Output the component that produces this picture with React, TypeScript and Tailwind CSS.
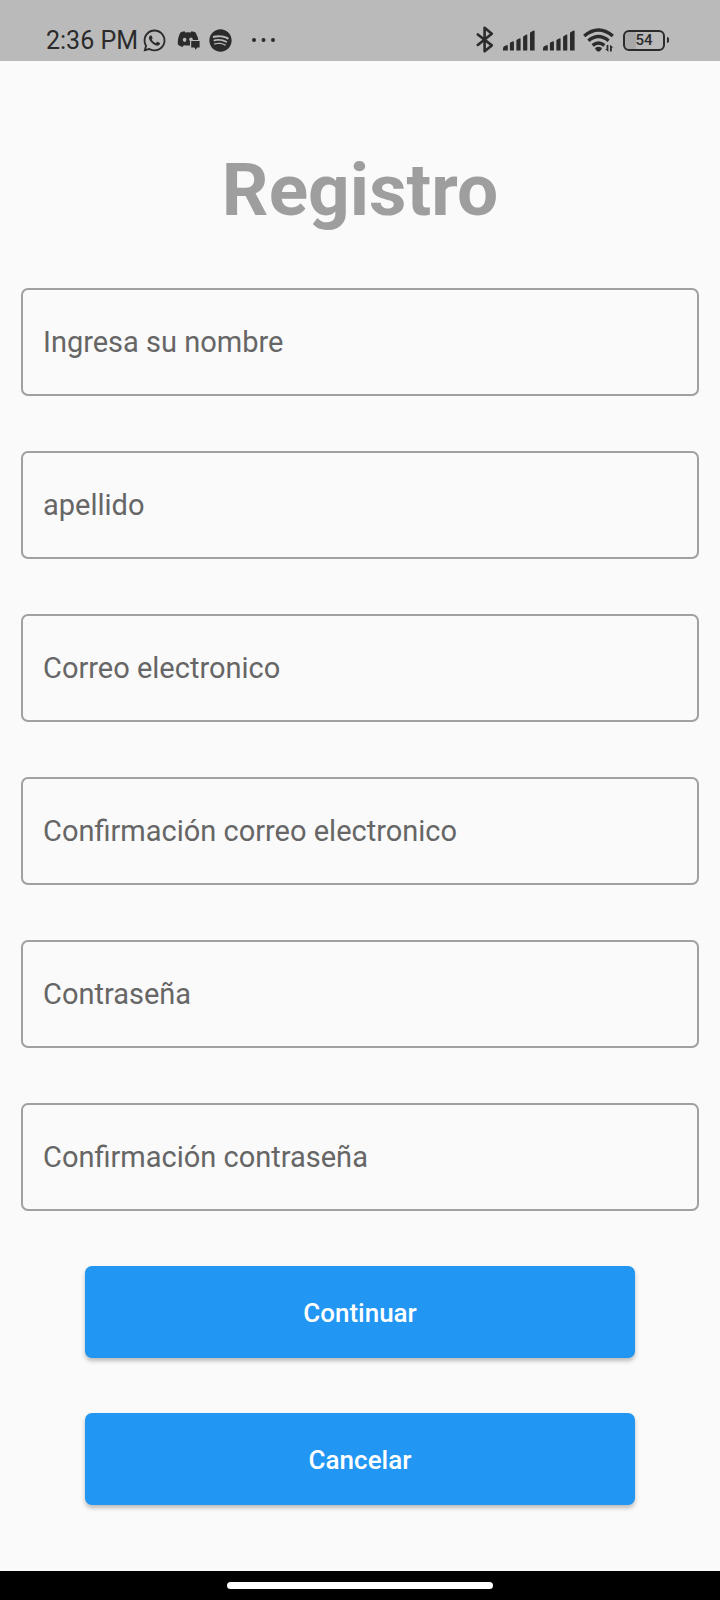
import { FaWhatsapp, FaSpotify } from "react-icons/fa";

const fields = [
  { id: "nombre", label: "Ingresa su nombre", type: "text" },
  { id: "apellido", label: "apellido", type: "text" },
  { id: "correo", label: "Correo electronico", type: "email" },
  { id: "correo2", label: "Confirmación correo electronico", type: "email" },
  { id: "clave", label: "Contraseña", type: "password" },
  { id: "clave2", label: "Confirmación contraseña", type: "password" },
];

function DiscordIcon() {
  return (
    <svg className="h-5 w-6" viewBox="0 0 24 20" aria-hidden="true">
      <path
        d="M7.6 1.2 8.3 2.4Q11 1.9 13.7 2.4L14.4 1.2Q17 1.6 18.6 2.6Q21.6 7.4 21.6 13.6L21.6 14.6Q19.5 16.4 16.4 17L15.2 15.2Q11 16 6.8 15.2L5.6 17Q2.6 16.4 .8 14.6Q.4 8 3.4 2.6Q5 1.6 7.6 1.2z"
        fill="currentColor"
      />
      <ellipse cx="7.6" cy="9.8" rx="1.8" ry="2.1" fill="#bababa" />
      <ellipse cx="14" cy="9.4" rx="1.8" ry="1.8" fill="#bababa" />
      <path d="M13 10h10.4v11.6H13z" fill="#bababa" />
      <path d="M14.2 11h8.4v6.6h-2.4l-1.5 2.2-1.2-2.2h-3.3z" fill="currentColor" />
    </svg>
  );
}

function BluetoothIcon() {
  return (
    <svg className="h-7 w-5" viewBox="0 0 20 28" fill="none" stroke="currentColor" strokeWidth="2.6" strokeLinejoin="round" strokeLinecap="round" aria-hidden="true">
      <path d="M2.8 8.5 16.8 19.4l-7.2 5.8V1.8l7.2 6L2.8 19" />
    </svg>
  );
}

function SignalIcon() {
  return (
    <svg className="h-[21px] w-8" viewBox="0 0 32 21" fill="currentColor" aria-hidden="true">
      <path d="M0 20.5v-2q0-2.2 2.2-2.8l2-.6q.6 0 .6.8v4.6zM6.9 20.5v-7.2q0-.8.8-1.1l2.4-1q.8-.2.8.7v8.6zM13.4 20.5v-9.8q0-.8.8-1.1l2.6-1.3q.8-.3.8.6v11.6zM20.1 20.5V7.1q0-.8.8-1.1l2.6-1.5q.8-.3.8.6v15.4zM27 20.5V3.1q0-.8.8-1.1l3-1.5q.8-.3.8.6v19.4z" />
    </svg>
  );
}

function WifiIcon() {
  return (
    <svg className="h-6 w-8" viewBox="0 0 32 24" fill="none" stroke="currentColor" strokeWidth="3.4" aria-hidden="true">
      <path d="M1.2 8Q15.5-4 29.8 8M5.4 12.8Q15.5 4.4 25.6 12.8M9.6 17.4q5.9-4.6 11.8 0" />
      <path d="M12.4 19.8q3.1-2.2 6.2 0q.8 1-.4 2l-1.4 1.4q-1.3.8-2.6 0l-1.4-1.4q-1.2-1-.4-2z" fill="currentColor" stroke="none" />
      <path d="M25.4 17v6.8L22 21h1.6v-4zM27 23.6v-6.8l3.4 2.8h-1.6v4z" fill="currentColor" stroke="none" />
    </svg>
  );
}

function Battery() {
  return (
    <div className="flex items-center gap-0.5">
      <div className="flex h-[21px] w-[42px] items-center justify-center rounded-md border-2 border-current bg-[linear-gradient(90deg,#a8a8a8_30%,#bababa_30%)] text-[15px] leading-4 font-medium">
        54
      </div>
      <div className="h-[6px] w-[2px] rounded-r-sm bg-current" />
    </div>
  );
}

function StatusBar() {
  return (
    <header className="flex h-[61px] items-end justify-between bg-[#bababa] pr-[51px] pb-[7px] pl-[46px] text-[#2b2b2b]">
      <div className="flex h-7 items-center">
        <span className="pt-0.5 text-[25px] leading-7">2:36 PM</span>
        <FaWhatsapp className="ml-1 size-[25px]" />
        <div className="ml-2.5">
          <DiscordIcon />
        </div>
        <FaSpotify className="ml-2 size-[23px]" />
        <svg className="ml-5 h-1 w-6" viewBox="0 0 24 4" fill="currentColor" aria-hidden="true">
          <circle cx="2" cy="2" r="2" />
          <circle cx="11.5" cy="2" r="2" />
          <circle cx="21" cy="2" r="2" />
        </svg>
      </div>
      <div className="flex h-7 items-center gap-2">
        <BluetoothIcon />
        <SignalIcon />
        <SignalIcon />
        <WifiIcon />
        <Battery />
      </div>
    </header>
  );
}

export default function App() {
  return (
    <div className="flex min-h-screen flex-col bg-[#fafafa] font-[Roboto,sans-serif]">
      <StatusBar />
      <main className="flex grow flex-col px-[21px] pt-[86px] pb-16">
        <h1 className="text-center text-[73px] leading-[86px] font-bold text-[#9e9e9e]">Registro</h1>
        <form className="mt-[55px] flex flex-col gap-[55px]" onSubmit={(e) => e.preventDefault()}>
          {fields.map((f) => (
            <input
              key={f.id}
              id={f.id}
              type={f.type}
              aria-label={f.label}
              placeholder={f.label}
              className="h-[108px] w-full rounded-[7px] border-2 border-[#a0a0a0] bg-transparent px-5 text-[29px] text-[#333333] outline-none placeholder:text-[#666666] focus:border-[#2196f3]"
            />
          ))}
          <button type="submit" className="mx-16 h-[92px] rounded-[7px] bg-[#2196f3] pt-0.5 text-[26px] font-medium text-white shadow-[0_3px_4px_rgba(0,0,0,0.25)]">
            Continuar
          </button>
          <button type="button" className="mx-16 h-[92px] rounded-[7px] bg-[#2196f3] pt-0.5 text-[26px] font-medium text-white shadow-[0_3px_4px_rgba(0,0,0,0.25)]">
            Cancelar
          </button>
        </form>
      </main>
      <footer className="flex h-[29px] items-center justify-center bg-black">
        <div className="h-[7px] w-[37%] rounded-full bg-white" />
      </footer>
    </div>
  );
}
